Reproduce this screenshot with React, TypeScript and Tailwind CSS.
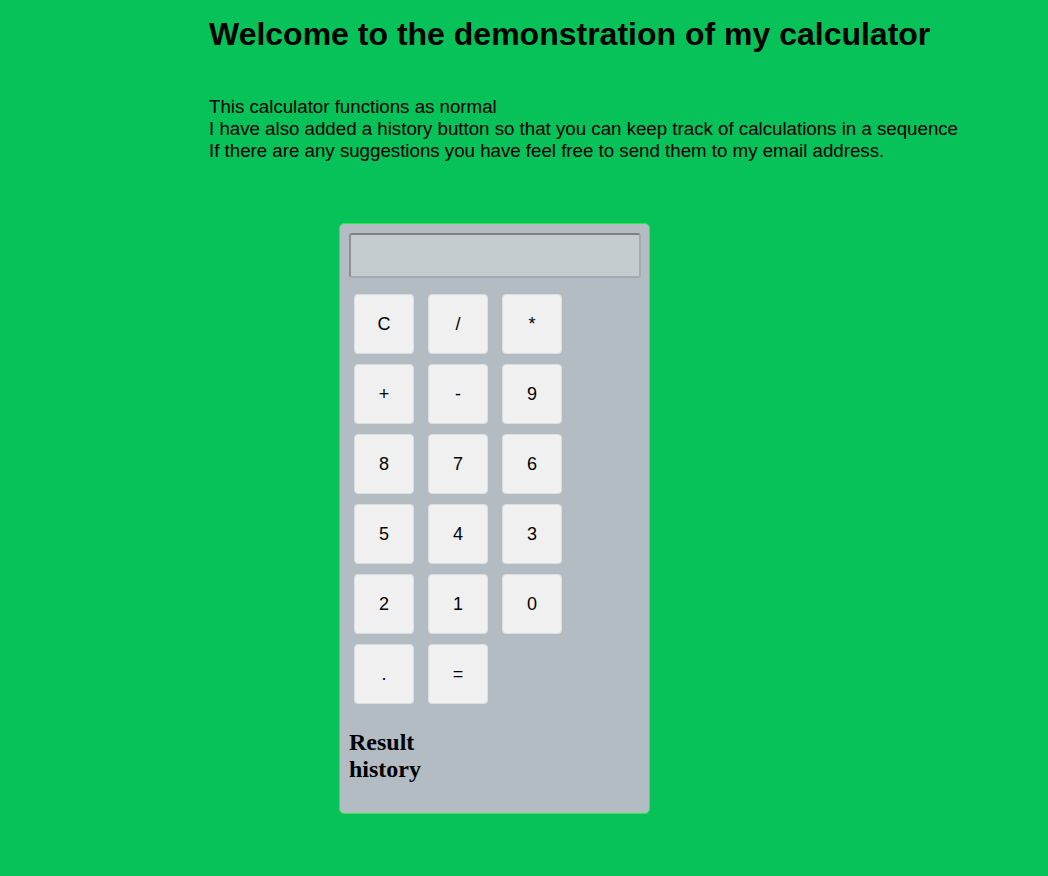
import React from "react";

const keys = ["C", "/", "*", "+", "-", "9", "8", "7", "6", "5", "4", "3", "2", "1", "0", ".", "="];

export default function App() {
  return (
    <div className="min-h-[876px] w-full bg-[#06c258] text-black" style={{ fontFamily: '"Liberation Sans", Arial, sans-serif' }}>
      <div className="pl-[209px] pt-[16px]">
        <h1 className="text-[32px] leading-[37px] font-bold">Welcome to the demonstration of my calculator</h1>
        <div className="mt-[43px] text-[18.7px] leading-[22px]">
          <p>This calculator functions as normal</p>
          <p>I have also added a history button so that you can keep track of calculations in a sequence</p>
          <p>If there are any suggestions you have feel free to send them to my email address.</p>
        </div>
      </div>
      <div className="pl-[339px] mt-[61px]">
        <div className="w-[311px] h-[591px] rounded-[5px] border border-[#2ee84c] bg-[#b3bcc2] pt-[9px] pl-[9px]">
          <div className="w-[292px] h-[45px] rounded-[3px] border-2 border-t-[#7d8385] border-l-[#8a9093] border-r-[#a4abae] border-b-[#a4abae] bg-[#c4cccf]" />
          <div className="mt-[16px] ml-[5px] grid grid-cols-[60px_60px_60px] gap-x-[14px] gap-y-[10px]">
            {keys.map((k) => (
              <button
                key={k}
                className="w-[60px] h-[60px] rounded-[4px] border border-[#dcdfe1] bg-[#f0f0f0] text-[18px] text-black flex items-center justify-center"
              >
                {k}
              </button>
            ))}
          </div>
          <div
            className="mt-[25px] w-[90px] text-[24px] leading-[27px] font-bold"
            style={{ fontFamily: '"Liberation Serif", "Times New Roman", serif' }}
          >
            Result history
          </div>
        </div>
      </div>
    </div>
  );
}
